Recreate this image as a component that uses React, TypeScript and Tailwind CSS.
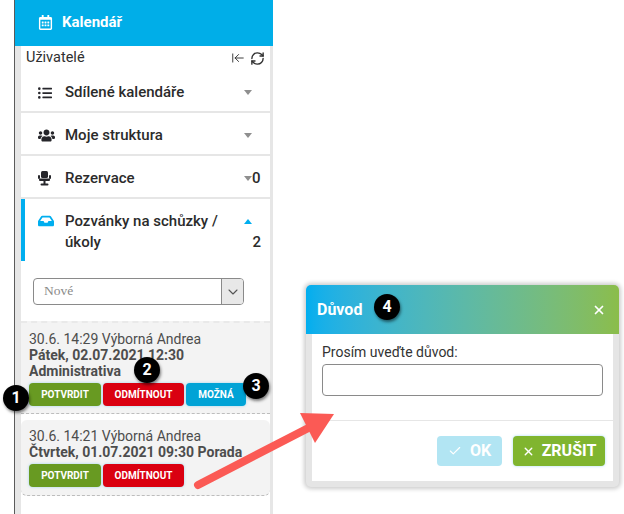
import { ArrowLeftToLine, RefreshCw, Check, X, ChevronDown } from "lucide-react";
import { FaRegCalendarAlt, FaListUl, FaUsers, FaInbox } from "react-icons/fa";
import type { ReactNode } from "react";

function ChairIcon() {
  return (
    <svg width="13" height="15" viewBox="0 0 13 15" fill="currentColor">
      <rect x="3" y="0" width="7" height="7" rx="1.5" />
      <rect x="0" y="4" width="2" height="4" rx="1" />
      <rect x="11" y="4" width="2" height="4" rx="1" />
      <rect x="1" y="7.5" width="11" height="2.5" rx="1" />
      <rect x="5.5" y="10" width="2" height="3" />
      <rect x="2.5" y="12.5" width="8" height="2" rx="1" />
    </svg>
  );
}

function Caret({ up = false }: { up?: boolean }) {
  return (
    <div
      className={
        up
          ? "w-0 h-0 border-x-[4px] border-x-transparent border-b-[5px] border-b-[#00aeef]"
          : "w-0 h-0 border-x-[4px] border-x-transparent border-t-[5px] border-t-[#8f8f8f]"
      }
    />
  );
}

function MenuRow({ icon, label, count }: { icon: ReactNode; label: string; count?: string }) {
  return (
    <div className="h-[43px] flex items-center border-b-2 border-[#e6e6e6] pl-[17px] pr-[9px] pt-[4px] shrink-0">
      <div className="w-[27px] text-[#26262b] flex justify-start">{icon}</div>
      <span className="text-[15px] font-medium text-[#2b2b2b] flex-1">{label}</span>
      <Caret />
      <span className={count ? "text-[15px] font-medium text-[#2b2b2b] w-[9px]" : "w-[9px]"}>{count}</span>
    </div>
  );
}

function ActionButton({ label, className }: { label: string; className: string }) {
  return (
    <div
      className={
        "h-[23px] rounded-[4px] flex items-center justify-center text-white text-[10px] font-bold shadow-[0_0_3px_rgba(0,160,230,0.35)] " +
        className
      }
    >
      {label}
    </div>
  );
}

function Badge({ n, className }: { n: string; className: string }) {
  return (
    <div
      className={
        "absolute w-[26px] h-[26px] rounded-full bg-black text-white flex items-center justify-center text-[16px] font-bold shadow-[1px_2px_3px_rgba(0,0,0,0.5)] " +
        className
      }
    >
      {n}
    </div>
  );
}

function Invite({ date, title }: { date: string; title: ReactNode }) {
  return (
    <div className="text-[14px] leading-[16px] text-[#4d4d4d]">
      <div>{date}</div>
      <div className="font-bold">{title}</div>
    </div>
  );
}

export default function App() {
  return (
    <div
      className="relative w-[624px] h-[514px] bg-white overflow-hidden"
      style={{ fontFamily: "Roboto, sans-serif" }}
    >
      <div className="ml-[14px] w-[259px] h-[514px] border-l border-[#5a5a5a] flex flex-col">
        <div className="h-[46px] bg-[#00aee8] flex items-center pl-[23px] pb-[2px] text-white shrink-0">
          <FaRegCalendarAlt size={15} />
          <span className="ml-[9px] text-[15px] font-bold">Kalendář</span>
        </div>
        <div className="flex-1 flex border-r-[3px] border-[#e6e6e6]">
          <div className="w-[6px] bg-[#e6e6e6] shrink-0" />
          <div className="flex-1 flex flex-col min-w-0">
            <div className="h-[24px] flex items-center justify-between pl-[5px] pr-[5px] text-[14.5px] text-[#2f2f2f] shrink-0">
              <span>Uživatelé</span>
              <div className="flex items-center gap-[5px]">
                <ArrowLeftToLine size={14} strokeWidth={1.6} />
                <RefreshCw size={15} strokeWidth={2.2} />
              </div>
            </div>
            <MenuRow icon={<FaListUl size={14} />} label="Sdílené kalendáře" />
            <MenuRow icon={<FaUsers size={17} />} label="Moje struktura" />
            <MenuRow icon={<ChairIcon />} label="Rezervace" count="0" />
            <div className="h-[62px] flex border-l-4 border-[#00aeef] pl-[13px] pr-[9px] pt-[11px] shrink-0">
              <div className="w-[27px] text-[#00aeef] pt-[3px]">
                <FaInbox size={16} />
              </div>
              <div className="flex-1 text-[15px] leading-[21px] font-medium text-[#2b2b2b] pt-[1px]">
                Pozvánky na schůzky /<br />
                úkoly
              </div>
              <div className="flex flex-col items-end w-[17px] text-[15px] leading-[21px] font-medium text-[#2b2b2b] pt-[1px]">
                <div className="h-[21px] w-full flex items-center">
                  <Caret up />
                </div>
                <span>2</span>
              </div>
            </div>
            <div className="mx-[12px] mt-[17px] w-[211px] h-[27px] border border-[#8a8a8a] rounded-[4px] flex overflow-hidden shrink-0">
              <div
                className="flex-1 pl-[10px] text-[13.5px] text-[#8a8a8a] flex items-center"
                style={{ fontFamily: "'Liberation Serif', serif" }}
              >
                Nové
              </div>
              <div className="w-[22px] border-l border-[#8a8a8a] bg-[#e8e8e8] flex items-center justify-center text-[#555]">
                <ChevronDown size={16} strokeWidth={1.6} />
              </div>
            </div>
            <div className="mt-[16px] h-[93px] bg-[#f3f3f3] border-t-2 border-[#e9e9e9] border-b border-b-[#bdbdbd] border-dashed pl-[8px] pt-[8px] shrink-0">
              <Invite date="30.6. 14:29 Výborná Andrea" title={<>Pátek, 02.07.2021 12:30<br />Administrativa</>} />
              <div className="flex gap-[2px] mt-[4px]">
                <ActionButton label="POTVRDIT" className="w-[72px] bg-[#689a22]" />
                <ActionButton label="ODMÍTNOUT" className="w-[81px] bg-[#da0011]" />
                <ActionButton label="MOŽNÁ" className="w-[60px] bg-[#00a3d6]" />
              </div>
            </div>
            <div className="mt-[6px] h-[76px] bg-[#f3f3f3] rounded-[6px] border-b border-b-[#bdbdbd] border-dashed pl-[8px] pt-[8px] shrink-0">
              <Invite date="30.6. 14:21 Výborná Andrea" title="Čtvrtek, 01.07.2021 09:30 Porada" />
              <div className="flex gap-[2px] mt-[4px]">
                <ActionButton label="POTVRDIT" className="w-[72px] bg-[#689a22]" />
                <ActionButton label="ODMÍTNOUT" className="w-[81px] bg-[#da0011]" />
              </div>
            </div>
          </div>
        </div>
      </div>

      {/* dialog */}
      <div className="absolute left-[306px] top-[285px] w-[313px] h-[202px] rounded-[5px] bg-[#e5e5e5] shadow-[0_0_4px_2px_rgba(0,0,0,0.2)] flex flex-col overflow-hidden">
        <div className="h-[49px] bg-gradient-to-r from-[#00aeef] to-[#8bbd4a] flex items-center justify-between pl-[11px] pr-[13px] pt-[1px] text-white shrink-0">
          <span className="text-[16px] font-bold">Důvod</span>
          <X size={14} strokeWidth={3} />
        </div>
        <div className="mx-[6px] mb-[6px] flex-1 bg-white flex flex-col">
          <div className="pl-[10px] pr-[10px] pt-[9px] h-[87px] border-b border-[#e6e6e6] shrink-0">
            <div className="text-[14px] leading-[18px] text-[#333]">Prosím uveďte důvod:</div>
            <div className="mt-[3px] h-[32px] w-[281px] border border-[#8a8a8a] rounded-[4px]" />
          </div>
          <div className="flex justify-end gap-[11px] pr-[8px] pt-[15px]">
            <div className="w-[65px] h-[30px] rounded-[4px] bg-[#b2e5f3] text-white flex items-center justify-center gap-[8px] text-[16px] font-bold">
              <Check size={14} />
              OK
            </div>
            <div className="w-[92px] h-[30px] rounded-[4px] bg-[#80b52f] text-white flex items-center justify-center gap-[7px] text-[16px] font-bold shadow-[0_0_3px_rgba(0,160,230,0.35)]">
              <X size={13} strokeWidth={2.5} />
              ZRUŠIT
            </div>
          </div>
        </div>
      </div>

      {/* arrow */}
      <svg className="absolute left-0 top-0" width="624" height="514" viewBox="0 0 624 514">
        <line x1="198" y1="485" x2="322" y2="421" stroke="#fb5a55" strokeWidth="8" strokeLinecap="round" />
        <polygon points="300,413 334,414 315,443" fill="#fb5a55" />
      </svg>

      <Badge n="1" className="left-[3px] top-[385px]" />
      <Badge n="2" className="left-[134px] top-[357px]" />
      <Badge n="3" className="left-[243px] top-[373px]" />
      <Badge n="4" className="left-[374px] top-[294px]" />
    </div>
  );
}
